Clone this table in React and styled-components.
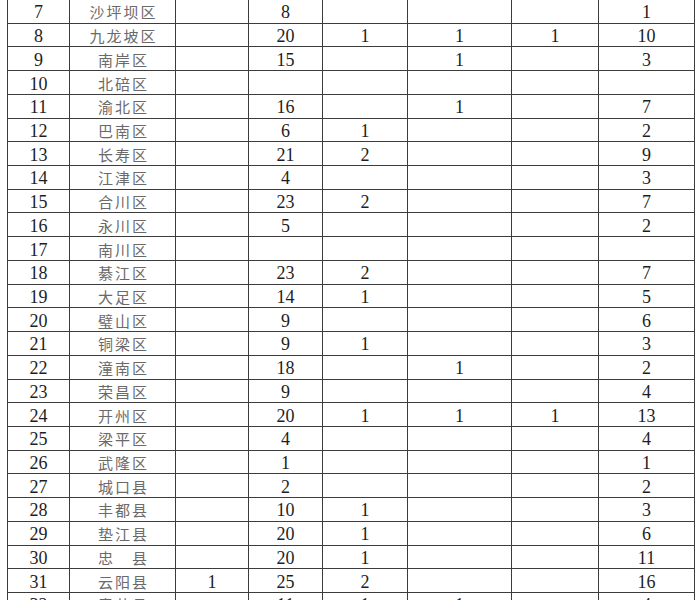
import styled, { createGlobalStyle } from "styled-components";

const GlobalStyle = createGlobalStyle`
  html, body {
    margin: 0;
    padding: 0;
    background: #fff;
    overflow: hidden;
  }
`;

const Page = styled.div`
  width: 700px;
  height: 600px;
  overflow: hidden;
  background: #fff;
`;

const Table = styled.table`
  border-collapse: collapse;
  table-layout: fixed;
  width: 688px;
  margin: -1px 0 0 7px;
`;

const Row = styled.tr`
  height: 23.73px;
`;

const Cell = styled.td`
  border: 1px solid #3c3c3c;
  padding: 2px 0 0 0;
  text-align: center;
  vertical-align: middle;
  line-height: 20px;
  white-space: nowrap;
  font-family: ${(p) =>
    p.$name
      ? '"Noto Sans CJK SC", "Liberation Serif", serif'
      : '"Liberation Serif", "Times New Roman", serif'};
  font-size: ${(p) => (p.$name ? "15px" : "18px")};
  color: ${(p) => (p.$name ? "#6a6a6a" : "#1e1e1e")};
  letter-spacing: ${(p) => (p.$name ? "2px" : "0")};
  padding-left: ${(p) => (p.$name ? "2px" : "0")};
`;

const widths = [62, 106, 73, 74, 85, 104, 87, 96];

const rows = [
  [7, "沙坪坝区", "", 8, "", "", "", 1],
  [8, "九龙坡区", "", 20, 1, 1, 1, 10],
  [9, "南岸区", "", 15, "", 1, "", 3],
  [10, "北碚区", "", "", "", "", "", ""],
  [11, "渝北区", "", 16, "", 1, "", 7],
  [12, "巴南区", "", 6, 1, "", "", 2],
  [13, "长寿区", "", 21, 2, "", "", 9],
  [14, "江津区", "", 4, "", "", "", 3],
  [15, "合川区", "", 23, 2, "", "", 7],
  [16, "永川区", "", 5, "", "", "", 2],
  [17, "南川区", "", "", "", "", "", ""],
  [18, "綦江区", "", 23, 2, "", "", 7],
  [19, "大足区", "", 14, 1, "", "", 5],
  [20, "璧山区", "", 9, "", "", "", 6],
  [21, "铜梁区", "", 9, 1, "", "", 3],
  [22, "潼南区", "", 18, "", 1, "", 2],
  [23, "荣昌区", "", 9, "", "", "", 4],
  [24, "开州区", "", 20, 1, 1, 1, 13],
  [25, "梁平区", "", 4, "", "", "", 4],
  [26, "武隆区", "", 1, "", "", "", 1],
  [27, "城口县", "", 2, "", "", "", 2],
  [28, "丰都县", "", 10, 1, "", "", 3],
  [29, "垫江县", "", 20, 1, "", "", 6],
  [30, "忠　县", "", 20, 1, "", "", 11],
  [31, "云阳县", 1, 25, 2, "", "", 16],
  [32, "奉节县", "", 11, 1, 1, "", 4],
];

export default function App() {
  return (
    <Page>
      <GlobalStyle />
      <Table>
        <colgroup>
          {widths.map((w, i) => (
            <col key={i} style={{ width: w }} />
          ))}
        </colgroup>
        <tbody>
          {rows.map((r) => (
            <Row key={r[0]}>
              {r.map((v, i) => (
                <Cell key={i} $name={i === 1}>
                  {v}
                </Cell>
              ))}
            </Row>
          ))}
        </tbody>
      </Table>
    </Page>
  );
}
